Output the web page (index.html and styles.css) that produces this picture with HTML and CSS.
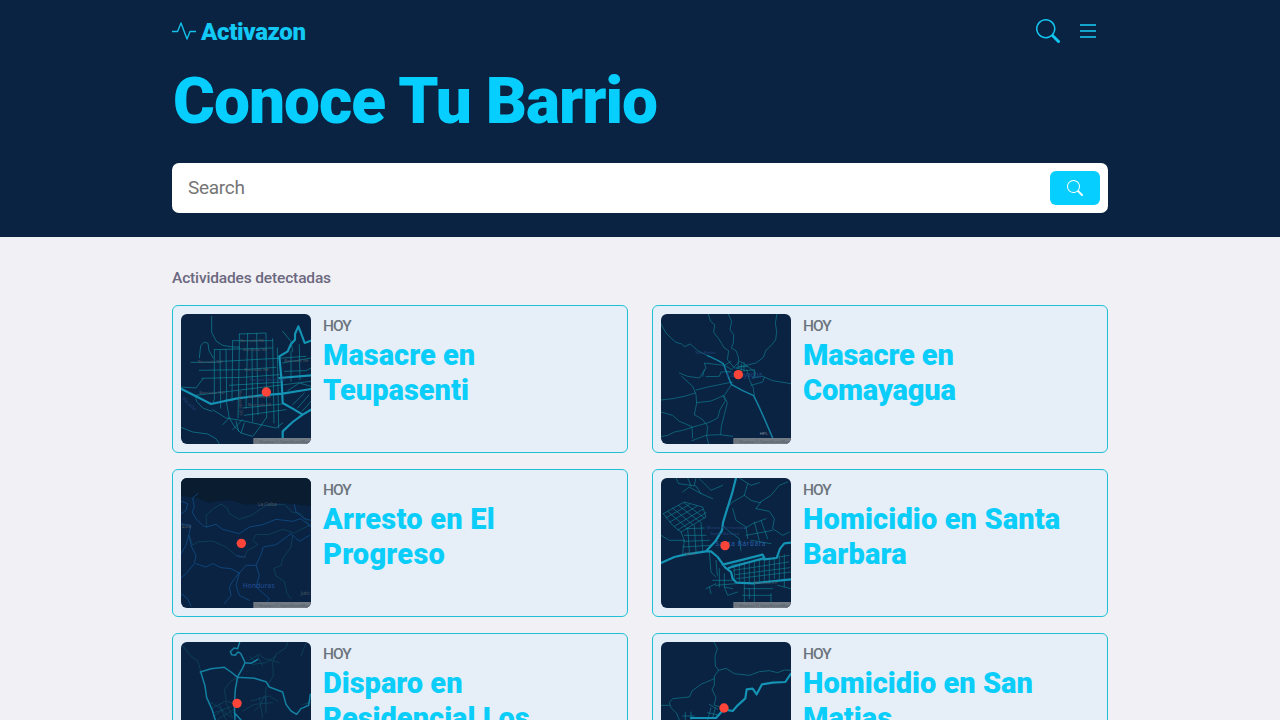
FILE: index.html
```html
<!DOCTYPE html>
<html lang="es">
<head>
<meta charset="utf-8">
<title>Activazon</title>
<link rel="stylesheet" href="styles.css">
</head>
<body>
<header class="hero">
  <div class="container">
    <nav class="nav">
      <a class="brand">
        <svg class="brand-icon" viewBox="0 0 24 20"><path d="M0 10.5H5.6L9 2L15 18L18 10.5H24"/></svg>
        <span class="brand-name">Activazon</span>
      </a>
      <div class="nav-actions">
        <svg class="nav-search" viewBox="0 0 16 16"><path d="M11.742 10.344a6.5 6.5 0 1 0-1.397 1.398h-.001c.03.04.062.078.098.115l3.85 3.85a1 1 0 0 0 1.415-1.414l-3.85-3.85a1.007 1.007 0 0 0-.115-.1zM12 6.5a5.5 5.5 0 1 1-11 0 5.5 5.5 0 0 1 11 0z"/></svg>
        <svg class="nav-menu" viewBox="0 0 16 14"><path d="M0 1H16M0 7H16M0 13H16"/></svg>
      </div>
    </nav>
    <h1 class="headline">Conoce Tu Barrio</h1>
    <form class="search">
      <input class="search-input" type="text" placeholder="Search">
      <button class="search-button" type="button" aria-label="Search">
        <svg viewBox="0 0 16 16"><path d="M11.742 10.344a6.5 6.5 0 1 0-1.397 1.398h-.001c.03.04.062.078.098.115l3.85 3.85a1 1 0 0 0 1.415-1.414l-3.85-3.85a1.007 1.007 0 0 0-.115-.1zM12 6.5a5.5 5.5 0 1 1-11 0 5.5 5.5 0 0 1 11 0z"/></svg>
      </button>
    </form>
  </div>
</header>
<main class="container content">
  <h2 class="section-label">Actividades detectadas</h2>
  <div class="cards">
    <article class="card">
      <svg class="map" viewBox="15 18 390 390">
        <g class="minor">
          <path d="M107 25V73L121 100L140 112L170 117H190M70 150L74 113L85 102L96 106L99 128L112 150M45 163H115L140 160L320 150L390 145M70 187L200 185L300 178M78 211L200 208L310 200M15 237L60 240L82 211M58 262L160 250L300 233L405 220M170 98H290M190 78L270 75L272 330M115 125L290 120M190 78V120M215 76L210 300M242 76L246 320M115 125V275L108 290M132 128L134 300M150 125L152 275M170 98L168 280M190 120L186 330M228 120L230 340M290 92L294 345M304 120L308 360M160 232L320 222M110 305L150 330L200 338L300 360L320 345M150 275L160 330L140 350M200 300L320 288M205 322L330 305M58 262L62 280L80 300L108 310M160 330L175 355L195 375L230 385L250 360L270 330M15 358L50 372L95 378L120 392L130 408M345 130V220M370 110L372 215M320 165L405 150M325 190L390 188L405 180M335 248L370 225L405 235M350 290L385 255M365 300L398 262M378 310L405 280M180 340L188 370M170 365L200 335M195 375L205 345M320 70L345 100L350 130"/>
        </g>
        <g class="major"><path d="M15 242L60 265L105 288L180 272L255 262L320 257L405 243M310 210L405 202M310 145L335 130L345 108L357 95V78L367 55L375 75L386 105L405 98M310 145L317 220L320 285L350 302L380 320L405 305M380 320L350 342L320 370V408"/></g>
        <g class="map-label"><text x="192" y="101">Barriada NE</text><text x="200" y="128">Barriada NE</text><text x="65" y="166">Barriada NO</text><text x="205" y="188">Barriada NE</text><text x="325" y="162">Barriada NE</text><text x="70" y="259">Barriada NO</text><text x="215" y="271">Barriada SE</text><text x="216" y="295">Barriada SE</text><text class="map-place" x="222" y="220">Parque Municipal</text><text class="map-place" transform="translate(18 274) rotate(43)">Río Jalán</text><text transform="translate(187 250) rotate(87)">Barriada SO</text></g>
        <rect class="credit" x="232" y="390" width="173" height="18"/><text class="credit-text" x="236" y="404" textLength="165" lengthAdjust="spacingAndGlyphs">© Mapbox © OpenStreetMap</text>
        <circle class="pin" cx="271" cy="252" r="14"/>
      </svg>
      <div class="card-body"><div class="date">HOY</div><h3 class="title">Masacre en Teupasenti</h3></div>
    </article>
    <article class="card">
      <svg class="map" viewBox="15 18 390 390">
        <g class="minor teal">
          <path d="M15 48L30 75L43 88L60 103L77 108L85 116L103 108L125 128L155 143M157 18L164 40L176 50L173 73L188 92L205 120L218 128L214 155L235 180M217 18L227 40L222 65L233 80L232 105L226 120L240 128L248 150L246 175M363 18L358 45L362 70L359 96L340 118L330 126L322 148L300 165L270 172L240 180M70 195L95 205L130 210L150 180L145 165L170 168L205 172L228 185M77 205L110 235L120 260L122 285L115 320M150 206L190 205L195 192L225 190M120 246L160 236L200 228L230 222M15 276L50 272L85 265L118 255M122 284L165 279L205 262L226 230M200 262L208 278L192 305L185 330L160 343L108 358L110 390M205 265L214 285L205 320L196 355L194 380M15 312L50 322L70 340L108 356M108 358L80 367L55 372L35 382L15 386M115 320L140 335L155 355L152 385L158 408M108 398L150 382L190 380L230 385M230 182L250 160L262 165L300 195L290 210L320 205L350 218L405 227M285 232L320 222L325 208M272 185L280 215L292 240L295 262M240 180L270 188L296 185L295 205M145 185L140 205M205 172L225 160M256 168V192M264 164V190M248 176H275"/>
        </g>
        <g class="medium"><path d="M155 143L185 157L202 167L209 185L219 212L227 230L260 248L293 263L310 298L330 343L350 390L355 408"/></g>
        <g class="map-label"><text class="map-place" x="118" y="137">San Pedro</text><text class="map-big" x="212" y="206">Comayagua</text><text class="map-white" x="311" y="382">HPL</text></g>
        <rect class="credit" x="232" y="390" width="173" height="18"/><text class="credit-text" x="236" y="404" textLength="165" lengthAdjust="spacingAndGlyphs">© Mapbox © OpenStreetMap</text>
        <circle class="pin" cx="247" cy="200" r="14"/>
      </svg>
      <div class="card-body"><div class="date">HOY</div><h3 class="title title-tight">Masacre en Comayagua</h3></div>
    </article>
    <article class="card">
      <svg class="map" viewBox="15 18 390 390">
        <path class="sea" d="M15 18H405V103L370 98L310 92L260 95L210 98L165 85L130 86L100 92L65 78L15 72Z"/>
        <g class="faint">
          <path d="M92 165L90 130L110 112L135 96L155 110L160 125L190 142L230 128L270 100L325 97L348 120L375 125L400 158M40 190L50 220L65 210L110 207L150 225L180 250L205 255L215 235L245 218L230 205L240 188L280 187L320 172L355 183L390 165L405 158M350 190L345 225L320 260L315 280L293 290L300 312L325 328L333 365L345 380"/>
        </g>
        <g class="blue">
          <path d="M65 65L50 78L55 105L48 120L60 140L80 160L90 165L120 157L140 172L190 185L220 165L260 158L300 142L350 148L375 140L405 165M15 88L35 95L30 115L15 125M15 155L45 160L38 190L47 225L60 250L55 275L30 305L15 318M38 190L30 220L15 245M60 275L90 285L110 275L135 287L165 290L190 303L175 320L160 345L165 370L145 395M190 303L210 280L240 280L255 248L262 225L300 218L345 185L370 208L400 190M240 280L250 310L240 345L280 380L265 400M190 303L180 340L190 370L220 385M15 365L35 380L45 402M355 98L360 120L385 140L405 145"/>
        </g>
        <g class="map-label"><text class="map-town" x="246" y="103">La Ceiba</text><text class="map-town" x="17" y="169">Sula</text><text class="map-place" x="182" y="257">Yoro</text><text class="map-country" x="200" y="347">Honduras</text><text class="map-place map-town" x="374" y="368">Jutic</text></g>
        <rect class="credit" x="232" y="390" width="173" height="18"/><text class="credit-text" x="236" y="404" textLength="165" lengthAdjust="spacingAndGlyphs">© Mapbox © OpenStreetMap</text>
        <circle class="pin" cx="196" cy="214" r="14"/>
      </svg>
      <div class="card-body"><div class="date">HOY</div><h3 class="title title-wide">Arresto en El Progreso</h3></div>
    </article>
    <article class="card">
      <svg class="map" viewBox="15 18 390 390">
        <g class="minor teal">
          <path d="M22 125L85 90L140 105L150 135L75 180L50 160L22 125M35 118L90 165M50 108L110 158M67 100L130 148M84 92L145 138M30 137L100 98M42 150L122 103M55 163L140 112M65 174L150 122M75 180L85 205L80 245M90 170L145 168M85 190H150M82 208L160 205M80 225L165 220M95 168L100 240M115 160L120 240M135 150L140 236M60 18L68 35L120 42L135 65M95 18L105 42M120 18L115 40M130 20L165 55L200 40M80 60L100 45L135 65L170 80M250 18L285 40L310 32M275 35L265 70L230 90L210 110M265 70L285 85L310 92L345 70L370 40L395 30M300 110L315 90M230 110L240 145L270 165L275 200M300 110L340 118L355 140L350 170L380 190L400 180M265 170L290 155L330 140M270 190L350 175M295 150L310 205M315 145L335 200M285 205L345 215M160 240L165 300L180 315M180 265L184 310M15 190L40 205L85 205M200 160L215 175L250 200L255 235"/>
          <path d="M205 305V345L230 350M190 290V345M170 325H235M178 340L240 335M205 345L215 370L245 360M235 280V330M250 276V335M265 270V350M280 268V335M295 264V350M310 262V335M325 262V325M340 258V325M355 256V320M370 250V320M385 248V345M225 280L400 250M232 295L398 270M238 308L402 287M242 320L405 300M150 350L180 335M265 350H350M260 370H345M265 350V390M280 350V380M295 350V390M345 365V390M365 340L405 350M160 345L165 365"/>
        </g>
        <g class="major"><path d="M240 18L228 65L210 122L201 152L198 175L178 208L150 238L90 247L55 255L15 273M150 238H165L185 255L208 287L225 300L230 320L242 332L290 334L405 322M200 278L240 268L320 248L325 258L238 282L218 288M325 262L362 258L372 230L385 214L405 212"/></g>
        <g class="map-label"><text class="map-place" x="152" y="170">Museo Hermandad</text><text class="map-place" x="163" y="190">Santa Bárbara</text><text class="map-city" x="178" y="222" textLength="150">Santa Bárbara</text><text x="295" y="336">Avenida 69</text><text x="84" y="250">CA-12</text></g>
        <rect class="credit" x="232" y="390" width="173" height="18"/><text class="credit-text" x="236" y="404" textLength="165" lengthAdjust="spacingAndGlyphs">© Mapbox © OpenStreetMap</text>
        <circle class="pin" cx="207" cy="221" r="14"/>
      </svg>
      <div class="card-body"><div class="date">HOY</div><h3 class="title title-wide-sm">Homicidio en Santa Barbara</h3></div>
    </article>
    <article class="card">
      <svg class="map" viewBox="15 18 390 390">
        <g class="faint"><path d="M20 30L45 60L65 75L75 108M335 18L330 35L300 55L290 80L292 120L270 155L268 200M375 60L390 22M150 190L145 160L165 135L185 125M220 72L250 55L265 68L310 80M230 85L270 80L300 60M245 60L260 90M220 60L240 78M110 215L150 195L180 205M115 230L165 212M125 250L175 220M105 200L130 215L165 245M130 205L150 252M150 200L170 245M140 220L110 245M225 195L280 180L305 195M235 225L255 205L265 180M200 225L235 205L290 200M250 185L260 245M270 185V230M380 205L405 200M385 215L403 190"/></g>
        <g class="medium teal"><path d="M191 18L185 38L174 36L163 47L167 56L178 58L186 48L194 52L203 70L207 80L199 98L185 122L178 160L175 205L177 252M207 80L225 82L245 70M73 108L105 98L145 94L165 108L185 124L235 127L270 137L280 153L320 168L330 205L345 225L362 235L375 218L398 208L403 175M75 110L87 150L92 185L108 220L118 252M175 230L195 252"/></g>
        <circle class="pin" cx="183" cy="202" r="14"/>
      </svg>
      <div class="card-body"><div class="date">HOY</div><h3 class="title">Disparo en Residencial Los</h3></div>
    </article>
    <article class="card">
      <svg class="map" viewBox="15 18 390 390">
        <g class="minor teal"><path d="M174 18L184 38L177 60L178 90L188 103L175 120V148L168 160L180 185L174 207L190 212M188 103L210 97L235 113L280 118L310 107L340 104L365 110L385 102L405 103M175 128L135 145L108 165L100 183L50 188L40 200L45 215L62 232L70 252M15 208H40M88 230V252M105 228V252M80 240H115M165 215L155 252M178 215L170 245M155 230L190 238M160 205L185 220"/></g>
        <g class="major"><path d="M105 246H180L190 235L204 220L230 225L245 208L268 187L272 160L290 158L302 175L318 145L350 140L388 138L405 113"/></g>
        <circle class="pin" cx="204" cy="216" r="14"/>
      </svg>
      <div class="card-body"><div class="date">HOY</div><h3 class="title">Homicidio en San Matias</h3></div>
    </article>
  </div>
</main>
</body>
</html>
```
FILE: styles.css
```css
* { box-sizing: border-box; }
body {
  margin: 0;
  height: 720px;
  overflow: hidden;
  background: #f1f0f5;
  font-family: Roboto, "Liberation Sans", sans-serif;
}
.container { width: 936px; margin: 0 auto; }
.hero { height: 237px; background: #0a2342; }
.nav { height: 64px; padding-bottom: 2px; display: flex; align-items: center; justify-content: space-between; }
.brand { display: flex; align-items: center; gap: 5px; color: #12c9f5; }
.brand-icon { width: 24px; height: 20px; fill: none; stroke: #12c0ea; stroke-width: 1.4; stroke-linejoin: round; }
.brand-name { padding-top: 1px; font-size: 24px; font-weight: 900; line-height: 30px; letter-spacing: -0.35px; }
.nav-actions { display: flex; align-items: center; gap: 20px; padding-right: 12px; }
.nav-search { width: 24px; height: 24px; fill: #12c5f0; }
.nav-menu { width: 16px; height: 14px; fill: none; stroke: #14a5cc; stroke-width: 1.8; }
.headline { margin: 0; height: 99px; padding-left: 1px; font-size: 64px; font-weight: 900; line-height: 76px; letter-spacing: -1px; color: #06cfff; white-space: nowrap; }
.search { display: flex; align-items: center; height: 50px; padding: 0 8px 0 16px; background: #fff; border-radius: 7px; }
.search-input { flex: 1; min-width: 0; padding: 0; border: 0; outline: 0; background: none; font: 400 19px/30px Roboto, sans-serif; letter-spacing: -0.3px; }
.search-input::placeholder { color: #757575; opacity: 1; }
.search-button { display: flex; align-items: center; justify-content: center; width: 50px; height: 34px; padding: 0; border: 0; border-radius: 6px; background: #06cfff; }
.search-button svg { width: 16px; height: 16px; fill: #fff; }
.content { padding-top: 29px; }
.section-label { margin: 0; height: 39px; font-size: 15.5px; font-weight: 500; line-height: 24px; letter-spacing: -0.15px; color: #6c687f; }
.cards { display: grid; grid-template-columns: 456px 456px; gap: 16px 24px; }
.card { display: flex; gap: 12px; height: 148px; padding: 8px; border: 1px solid #1fc0d6; border-radius: 6px; background: #e6eff7; overflow: hidden; }
.map { flex: none; width: 130px; height: 130px; border-radius: 6px; background: #0a2342; }
.card-body { flex: 1; padding-top: 1px; }
.date { font-size: 15.5px; font-weight: 500; line-height: 22px; letter-spacing: -1px; color: #6c757d; }
.title { margin: 0; padding-top: 1px; width: 270px; font-size: 29px; font-weight: 900; line-height: 35px; color: #0acdf9; }
.title-tight { letter-spacing: -0.15px; }
.title-wide { letter-spacing: 0.25px; }
.title-wide-sm { letter-spacing: 0.12px; }
.map path { fill: none; stroke-linejoin: round; stroke-linecap: round; }
.minor path { stroke: #12909f; stroke-width: 2.8; opacity: .68; }
.teal path { stroke: #128296; }
.major path { stroke: #1593b4; stroke-width: 6.5; }
.medium path { stroke: #1592b3; stroke-width: 4.5; opacity: .85; }
.faint path { stroke: #115069; stroke-width: 2.4; opacity: .75; }
.blue path { stroke: #11508e; stroke-width: 3; opacity: .75; }
.map .sea { fill: #0a1c30; stroke: none; }
.map-label { font: 13px "Noto Sans", sans-serif; fill: #505c68; }
.map-place { fill: #25447c; }
.map-big { font-size: 19px; fill: #224888; }
.map-white { font-size: 13px; fill: #8791a6; }
.map-town { font-size: 14px; fill: #4a5965; }
.map-country { font-size: 20px; fill: #214f98; letter-spacing: .5px; }
.map-city { font-size: 19px; fill: #2b61ae; }
.credit { fill: #737b85; }
.credit-text { font: 13px "Noto Sans", sans-serif; fill: #4f5965; }
.pin { fill: #ff453a; }
```
